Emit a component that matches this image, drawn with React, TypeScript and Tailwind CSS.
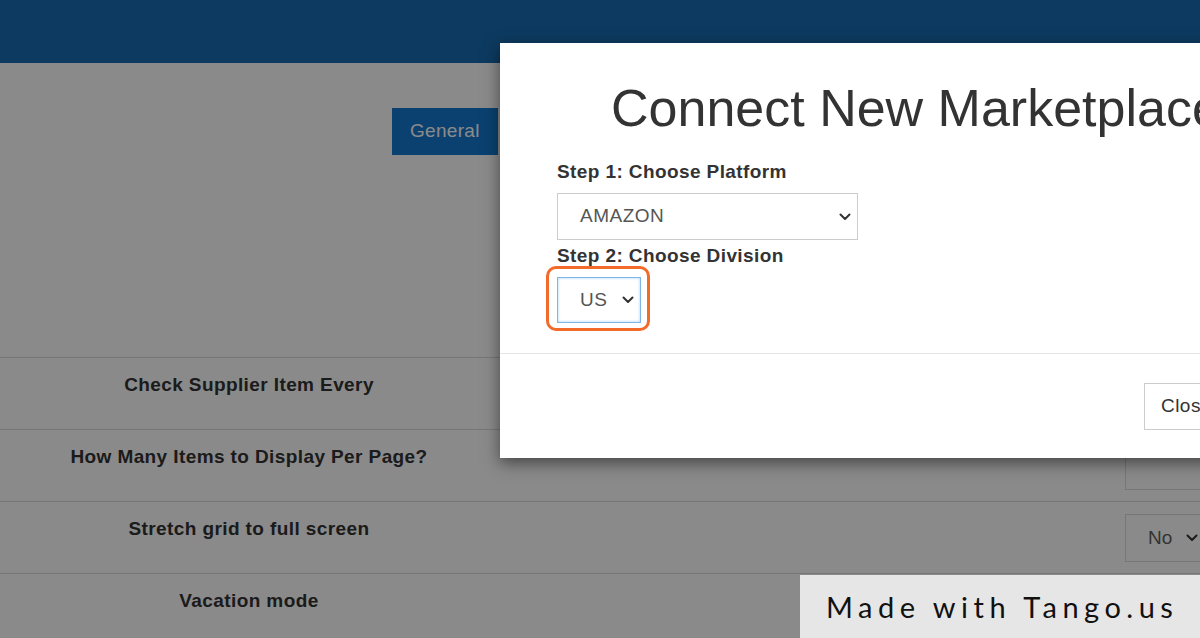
const rows = [
  { label: "Check Supplier Item Every", control: "none" },
  { label: "How Many Items to Display Per Page?", control: "input" },
  { label: "Stretch grid to full screen", control: "select" },
  { label: "Vacation mode", control: "none" },
];

function Chevron() {
  return (
    <svg width="12" height="8" viewBox="0 0 12 8" className="shrink-0">
      <path
        d="M1.5 1.5 L6 6 L10.5 1.5"
        fill="none"
        stroke="#333"
        strokeWidth="2"
        strokeLinecap="round"
        strokeLinejoin="round"
      />
    </svg>
  );
}

function SettingsPage() {
  return (
    <div className="absolute inset-0 bg-white font-['Liberation_Sans',Arial,sans-serif]">
      {/* Top bar */}
      <div className="h-[63px] bg-[#186bb2]" />

      {/* Tabs */}
      <div className="flex pl-[392px] pt-[45px]">
        <div className="h-[47px] px-[18px] flex items-center bg-[#1479cf] text-white text-[19px] tracking-[0.3px]">
          General
        </div>
        <div className="h-[47px] px-[18px] flex items-center text-[#1479cf] text-[19px]">
          Suppliers
        </div>
      </div>

      {/* Settings table */}
      <div className="mt-[202px] border-t border-[#dddddd]">
        {rows.map((row) => (
          <div
            key={row.label}
            className="h-[72px] flex border-b border-[#dddddd]"
          >
            <div className="w-[498px] shrink-0 pt-[13px] text-center text-[19px] tracking-[0.4px] font-bold text-[#333]">
              {row.label}
            </div>
            <div className="min-w-0 flex-1 pl-[627px] pt-[12px]">
              {row.control === "input" && (
                <div className="h-[48px] w-[120px] border border-[#dddddd] bg-white" />
              )}
              {row.control === "select" && (
                <div className="h-[48px] w-[120px] border border-[#dddddd] bg-white flex items-center pl-[22px] gap-[14px] text-[19px] text-[#5f5f5f]">
                  No
                  <Chevron />
                </div>
              )}
            </div>
          </div>
        ))}
      </div>
    </div>
  );
}

function ConnectModal() {
  return (
    <div className="absolute left-[500px] top-[43px] w-[740px] bg-white shadow-[0_5px_15px_rgba(0,0,0,0.5)] font-['Liberation_Sans',Arial,sans-serif] text-[#333]">
      <div className="pt-[39px] pl-[111px] text-[52px] leading-[53px] whitespace-nowrap">
        Connect New Marketplace
      </div>

      <div className="pl-[57px] pt-[27px] pb-[30px]">
        <div className="text-[19px] tracking-[0.4px] font-bold leading-[20px]">
          Step 1: Choose Platform
        </div>
        <div className="mt-[11px] h-[47px] w-[301px] border border-[#cccccc] flex items-center justify-between pl-[22px] pr-[6px] text-[19px] tracking-[0.5px] text-[#555]">
          AMAZON
          <Chevron />
        </div>
        <div className="mt-[6px] text-[19px] tracking-[0.4px] font-bold leading-[20px]">
          Step 2: Choose Division
        </div>
        <div className="relative mt-[11px] w-[84px]">
          <div className="h-[46px] w-[84px] border border-[#7fb5e8] shadow-[inset_0_0_3px_rgba(102,175,233,0.6)] flex items-center pl-[22px] gap-[15px] text-[19px] tracking-[0.5px] text-[#555]">
            US
            <Chevron />
          </div>
          {/* highlight ring */}
          <div className="absolute left-[-11px] top-[-11px] right-[-9px] bottom-[-8px] rounded-[10px] border-[3px] border-[#f36b2b]" />
        </div>
      </div>

      <div className="border-t border-[#e5e5e5] flex justify-end pt-[29px] pb-[28px] pr-[11px]">
        <div className="h-[47px] px-[16px] flex items-center border border-[#cccccc] text-[19px] tracking-[0.5px] text-[#333]">
          Close
        </div>
      </div>
    </div>
  );
}

export default function App() {
  return (
    <div className="relative w-[1200px] h-[638px] overflow-hidden">
      <SettingsPage />
      {/* Backdrop */}
      <div className="absolute inset-0 bg-[rgba(0,0,0,0.46)]" />
      <ConnectModal />
      {/* Watermark */}
      <div className="absolute left-[800px] top-[575px] w-[400px] h-[63px] bg-[#e6e6e6] flex items-center pl-[26px] font-['Lato',sans-serif] text-[29px] tracking-[5.5px] text-[#111]">
        Made with Tango.us
      </div>
    </div>
  );
}
